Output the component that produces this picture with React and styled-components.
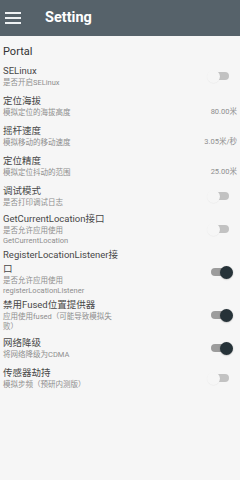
import React from 'react'
import styled, { createGlobalStyle } from 'styled-components'

const GlobalStyle = createGlobalStyle`
    html, body {
        margin: 0;
        padding: 0;
        background: #f6f6f6;
    }
    body {
        font-family: Roboto, "Noto Sans CJK SC", sans-serif;
    }
`;

const prefs = [
    { title: 'SELinux', summary: '是否开启SELinux', type: 'switch', on: false },
    { title: '定位海拔', summary: '模拟定位的海拔高度', type: 'value', value: '80.00米' },
    { title: '摇杆速度', summary: '模拟移动的移动速度', type: 'value', value: '3.05米/秒' },
    { title: '定位精度', summary: '模拟定位抖动的范围', type: 'value', value: '25.00米' },
    { title: '调试模式', summary: '是否打印调试日志', type: 'switch', on: false },
    { title: 'GetCurrentLocation接口', summary: '是否允许应用使用GetCurrentLocation', type: 'switch', on: false },
    { title: 'RegisterLocationListener接口', summary: '是否允许应用使用registerLocationListener', type: 'switch', on: true },
    { title: '禁用Fused位置提供器', summary: '应用使用fused（可能导致模拟失败）', type: 'switch', on: true },
    { title: '网络降级', summary: '将网络降级为CDMA', type: 'switch', on: true },
    { title: '传感器劫持', summary: '模拟步频（预研内测版）', type: 'switch', on: false },
];

function MenuIcon() {
    return (
        <svg width="16" height="12" viewBox="0 0 16 12">
            <rect x="0" y="0" width="16" height="2" fill="#eef1f3" />
            <rect x="0" y="5" width="16" height="2" fill="#eef1f3" />
            <rect x="0" y="10" width="16" height="2" fill="#eef1f3" />
        </svg>
    )
}

function Toggle({ on }) {
    return (
        <SwitchBox>
            <Track $on={on} />
            <Thumb $on={on} />
        </SwitchBox>
    )
}

export default function App() {
    return (
        <>
            <GlobalStyle />
            <Page>
                <Toolbar>
                    <MenuButton><MenuIcon /></MenuButton>
                    <ToolbarTitle>Setting</ToolbarTitle>
                </Toolbar>
                <Category>Portal</Category>
                {prefs.map(p => (
                    <Row key={p.title}>
                        <TextCol>
                            <Title>{p.title}</Title>
                            <Summary>{p.summary}</Summary>
                        </TextCol>
                        {p.type === 'value'
                            ? <Value>{p.value}</Value>
                            : <Widget><Toggle on={p.on} /></Widget>}
                    </Row>
                ))}
            </Page>
        </>
    )
}

const Page = styled.div`
    width: 240px;
    min-height: 480px;
    background: #f6f6f6;
`;

const Toolbar = styled.div`
    height: 36px;
    background: #56626a;
    display: flex;
    align-items: center;
`;

const MenuButton = styled.div`
    width: 16px;
    margin-left: 5px;
    display: flex;
    align-items: center;
`;

const ToolbarTitle = styled.span`
    margin-left: 24px;
    color: #ffffff;
    font-size: 14.5px;
    font-weight: bold;
    line-height: 18px;
`;

const Category = styled.div`
    padding: 9px 3px 2px;
    font-size: 11px;
    line-height: 14px;
    color: #333333;
`;

const Row = styled.div`
    display: flex;
    align-items: center;
    min-height: 30px;
    padding: 1px 4px 1px 3px;
    box-sizing: border-box;
`;

const TextCol = styled.div`
    width: 116px;
    flex: none;
    display: flex;
    flex-direction: column;
`;

const Title = styled.span`
    font-size: 9.5px;
    line-height: 14px;
    color: #484848;
`;

const Summary = styled.span`
    font-size: 7.5px;
    line-height: 10px;
    color: #8e8e8e;
`;

const Value = styled.span`
    margin-left: auto;
    margin-right: -1px;
    align-self: flex-end;
    margin-bottom: 3px;
    font-size: 7.5px;
    line-height: 10px;
    color: #8e8e8e;
`;

const Widget = styled.div`
    margin-left: auto;
    margin-right: 3px;
    display: flex;
    align-items: center;
`;

const SwitchBox = styled.div`
    position: relative;
    width: 26px;
    height: 13px;
`;

const Track = styled.div`
    position: absolute;
    left: 4px;
    right: 4px;
    top: 2.5px;
    height: 8px;
    border-radius: 4px;
    background: ${p => (p.$on ? '#9c9c9c' : '#c2c2c2')};
`;

const Thumb = styled.div`
    position: absolute;
    top: 0;
    left: ${p => (p.$on ? '13px' : '0')};
    width: 13px;
    height: 13px;
    border-radius: 50%;
    background: ${p => (p.$on ? '#263238' : '#f6f6f6')};
    box-shadow: ${p => (p.$on ? '0 0.5px 1.5px rgba(0,0,0,0.3)' : '0 0.5px 1px rgba(0,0,0,0.06)')};
`;
